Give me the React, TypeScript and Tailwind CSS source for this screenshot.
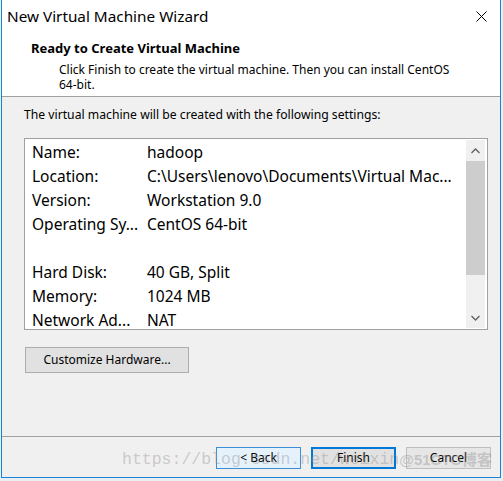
import React from "react";

const font = { fontFamily: '"Noto Sans", "Open Sans", sans-serif' };

const rows: [string, string][] = [
  ["Name:", "hadoop"],
  ["Location:", "C:\\Users\\lenovo\\Documents\\Virtual Mac..."],
  ["Version:", "Workstation 9.0"],
  ["Operating Sy...", "CentOS 64-bit"],
  ["", ""],
  ["Hard Disk:", "40 GB, Split"],
  ["Memory:", "1024 MB"],
  ["Network Ad...", "NAT"],
];

function Chevron({ up }: { up?: boolean }) {
  return (
    <svg width="9" height="6" viewBox="0 0 9 6" className="block">
      <path
        d={up ? "M0.5 5 L4.5 1 L8.5 5" : "M0.5 1 L4.5 5 L8.5 1"}
        fill="none"
        stroke="#606060"
        strokeWidth="1.3"
      />
    </svg>
  );
}

export default function App() {
  return (
    <div className="relative w-[503px] h-[481px] overflow-hidden bg-[#e9eef3]" style={font}>
      <div className="ml-[1px] w-[500px] h-[478px] border-x border-b border-[#1883d7] flex flex-col bg-[#f0f0f0] text-black">
        {/* Title bar */}
        <div className="h-[33px] bg-white flex items-center justify-between pl-[5px] pr-[13px]">
          <span className="text-[15.3px] leading-none">New Virtual Machine Wizard</span>
          <svg width="11" height="11" viewBox="0 0 11 11">
            <path d="M0.5 0.5 L10.5 10.5 M10.5 0.5 L0.5 10.5" stroke="#000" strokeWidth="1" />
          </svg>
        </div>
        {/* Header */}
        <div className="h-[64px] bg-white border-b border-[#a0a0a0] pl-[29px] pt-[7px]">
          <div className="text-[13px] leading-[16px] font-bold">Ready to Create Virtual Machine</div>
          <div className="pl-[28px] pt-[6px] text-[12px] leading-[15px] w-[430px]">
            Click Finish to create the virtual machine. Then you can install CentOS 64&#8209;bit.
          </div>
        </div>
        {/* Body */}
        <div className="flex-1 flex flex-col pl-[22px] pt-[10px]">
          <div className="text-[12.2px] leading-[16px]">
            The virtual machine will be created with the following settings:
          </div>
          <div className="mt-[15px] w-[464px] h-[192px] border border-[#a0a0a0] bg-white flex">
            <div className="flex-1 overflow-hidden pt-[2px] pl-[7px]">
              {rows.map(([k, v], i) => (
                <div key={i} className="h-[24px] flex items-center text-[15.5px] whitespace-nowrap">
                  <span className="w-[115px]">{k}</span>
                  <span>{v}</span>
                </div>
              ))}
            </div>
            <div className="w-[19px] mr-[2px] my-[1px] bg-[#f0f0f0] flex flex-col items-center">
              <div className="h-[21px] flex items-center justify-center">
                <Chevron up />
              </div>
              <div className="w-full h-[114px] bg-[#cdcdcd]" />
              <div className="flex-1" />
              <div className="h-[21px] flex items-center justify-center">
                <Chevron />
              </div>
            </div>
          </div>
          <div className="mt-[17px] ml-[1px] w-[164px] h-[26px] border border-[#adadad] bg-[#e1e1e1] flex items-center justify-center text-[12px]">
            Customize Hardware...
          </div>
        </div>
        {/* Footer */}
        <div className="h-[41px] border-t border-[#a0a0a0] flex justify-end items-start pt-[10px] pr-[9px] gap-[10px]">
          <div className="w-[85px] h-[22px] border border-[#3c8fd6] bg-[#e5f1fb] flex items-center justify-center text-[12px]">
            &lt; Back
          </div>
          <div className="w-[85px] h-[22px] border-2 border-[#0078d7] bg-[#e1e1e1] flex items-center justify-center text-[12px]">
            Finish
          </div>
          <div className="w-[85px] h-[22px] border border-[#bfbfbf] bg-[#e6e6e6] flex items-center justify-center text-[12px]">
            Cancel
          </div>
        </div>
      </div>
      {/* Watermark */}
      <div className="absolute left-[122px] top-[448px] flex items-center text-[rgba(140,140,140,0.4)] whitespace-nowrap pointer-events-none">
        <span className="text-[16.5px]" style={{ fontFamily: '"Liberation Mono", monospace' }}>
          https://blog.csdn.net/weixin
        </span>
        <span className="text-[15px] font-bold" style={{ fontFamily: '"Liberation Sans", "Noto Sans CJK SC", sans-serif' }}>
          @51CTO博客
        </span>
      </div>
    </div>
  );
}
